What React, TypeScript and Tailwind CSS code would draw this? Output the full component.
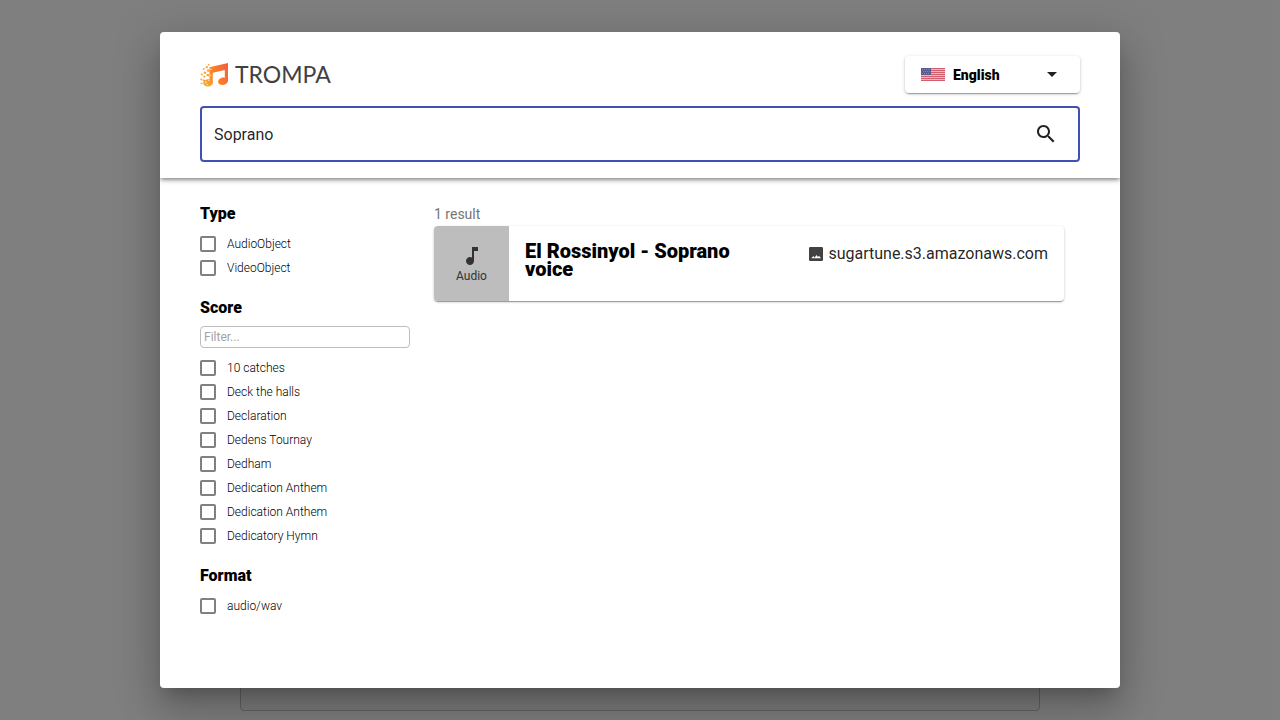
import { useState } from "react";

const scores = [
  "10 catches",
  "Deck the halls",
  "Declaration",
  "Dedens Tournay",
  "Dedham",
  "Dedication Anthem",
  "Dedication Anthem",
  "Dedicatory Hymn",
];

function Logo() {
  return (
    <a href="#" className="flex h-9 items-center gap-1.5 text-[#414042]">
      <svg width="29" height="25" viewBox="0 0 29 25" aria-hidden="true">
        <defs>
          <linearGradient id="note" gradientUnits="userSpaceOnUse" x1="2" x2="28" y1="20" y2="6">
            <stop offset="0" stopColor="#fbb03b" />
            <stop offset="0.45" stopColor="#fb8420" />
            <stop offset="1" stopColor="#f4603c" />
          </linearGradient>
        </defs>
        <g fill="url(#note)">
          <path d="M9.500 5.200 28 1v18h-3.200V8L12.800 10.800V21H9.500z" />
          <ellipse cx="23" cy="19.200" rx="5" ry="3.700" transform="rotate(-12 23 19.200)" />
          <ellipse cx="8" cy="20.800" rx="4.900" ry="3.700" transform="rotate(-12 8 20.800)" />
        </g>
        <path
          fill="#fba32f"
          d="m6 4 2.200.6-.8 2-1.900-.8zM3 6l1.800.4-.5 1.700L2.600 7.500zM7 7.500l3 .2-.6 2.200-2.400-.5zM4 9.500l2.400.6-.7 2-2.200-.8zM1 11.500l1.900.3-.5 1.700-1.700-.5zM6.500 12l3 .3-.5 2.200-2.500-.5zM3.500 13.500l2 .4-.5 1.900-1.800-.6zM.6 16.500l1.800.3-.4 1.600-1.700-.5zM3 17.500l2.200.3-.5 2-2-.7zM.8 20.500l1.700.2-.3 1.500-1.600-.5zM8 2l1.600.3-.4 1.400-1.400-.4z"
        />
        <path
          fill="#fff"
          d="m10.500 6.500 1.200.3-.4 1.200-1.100-.4zM8.500 17.500l1.200.3-.4 1.200-1.100-.4zM5.500 19.500l1.200.3-.4 1.200-1.100-.4zM10.300 12.500l1 .2-.3 1-1-.3zM7 22l1 .2-.3.900-1-.3z"
        />
      </svg>
      <span className="font-[Lato,sans-serif] text-[23px] leading-none">TROMPA</span>
    </a>
  );
}

function UsFlag() {
  return (
    <svg
      width="24"
      height="13"
      viewBox="0 0 24 13"
      className="pointer-events-none absolute left-4 top-3"
      aria-hidden="true"
    >
      <rect width="24" height="13" fill="#eab8bf" />
      <path
        stroke="#d0606f"
        d="M0 .5h24M0 2.500h24M0 4.500h24M0 6.500h24M0 8.500h24M0 10.500h24M0 12.500h24"
      />
      <rect width="10" height="7" fill="#595c8c" />
      <path
        stroke="#8386aa"
        strokeDasharray="1 1"
        d="M1 1.500h8M2 3.500h8M1 5.500h8"
      />
    </svg>
  );
}

function LanguageSelect() {
  return (
    <div className="relative w-[175px] rounded bg-white shadow-[0_3px_1px_-2px_rgba(0,0,0,0.2),0_1px_2px_0_rgba(0,0,0,0.2),0_1px_4px_0_rgba(0,0,0,0.12)]">
      <UsFlag />
      <select
        aria-label="Language"
        className="block h-[37px] w-full appearance-none rounded bg-transparent pl-12 pr-10 text-sm font-black text-black"
      >
        <option>English</option>
      </select>
      <svg
        width="24"
        height="24"
        viewBox="0 0 24 24"
        fill="#212121"
        className="pointer-events-none absolute right-4 top-1.5"
        aria-hidden="true"
      >
        <path d="m7 10 5 5 5-5z" />
      </svg>
    </div>
  );
}

function SearchField() {
  const [query, setQuery] = useState("Soprano");
  return (
    <form
      className="mt-3 flex h-14 items-center rounded border-2 border-[#3f51b5] pl-3 pr-5"
      onSubmit={(event) => event.preventDefault()}
    >
      <input
        type="text"
        aria-label="Search"
        value={query}
        onChange={(event) => setQuery(event.target.value)}
        className="min-w-0 flex-1 bg-transparent pt-0.5 text-base text-black/87 outline-none"
      />
      <button type="submit" aria-label="Search">
        <svg width="24" height="24" viewBox="0 0 24 24" fill="#212121">
          <path d="M15.500 14h-.79l-.28-.27C15.410 12.590 16 11.110 16 9.500 16 5.910 13.090 3 9.500 3S3 5.910 3 9.500 5.910 16 9.500 16c1.610 0 3.090-.59 4.230-1.570l.27.28v.79l5 4.990L20.490 19l-4.990-5zm-6 0C7.010 14 5 11.990 5 9.500S7.010 5 9.500 5 14 7.010 14 9.500 11.990 14 9.500 14z" />
        </svg>
      </button>
    </form>
  );
}

function Option({ label }: { label: string }) {
  return (
    <li>
      <label className="flex h-6 items-center gap-[11px] text-xs font-light text-black">
        <input
          type="checkbox"
          className="size-4 shrink-0 appearance-none rounded-xs border-2 border-[#808080] checked:bg-[#3f51b5]"
        />
        {label}
      </label>
    </li>
  );
}

function Facet({
  title,
  options,
  filterable = false,
}: {
  title: string;
  options: string[];
  filterable?: boolean;
}) {
  return (
    <section>
      <h2 className="text-base font-black text-black">{title}</h2>
      {filterable && (
        <input
          type="text"
          aria-label={`Filter ${title}`}
          placeholder="Filter..."
          className="mb-2 mt-1.5 block h-[22px] w-full rounded border border-[#bdbdbd] px-[3px] text-xs placeholder:text-[#a3a3a3]"
        />
      )}
      <ul className={filterable ? "" : "mt-1.5"}>
        {options.map((option, index) => (
          <Option key={index} label={option} />
        ))}
      </ul>
    </section>
  );
}

function ResultCard() {
  return (
    <article className="flex h-[75px] overflow-hidden rounded bg-white shadow-[0_2px_1px_-1px_rgba(0,0,0,0.2),0_1px_1px_0_rgba(0,0,0,0.14),0_1px_3px_0_rgba(0,0,0,0.2)]">
      <div className="flex w-[75px] shrink-0 flex-col items-center justify-center bg-[#bdbdbd] text-xs text-[#333]">
        <svg width="24" height="24" viewBox="0 0 24 24" fill="#333" aria-hidden="true">
          <path d="M12 3v10.550c-.59-.34-1.270-.55-2-.55-2.210 0-4 1.790-4 4s1.790 4 4 4 4-1.790 4-4V7h4V3h-6z" />
        </svg>
        <span>Audio</span>
      </div>
      <div className="flex min-w-0 flex-1 items-start justify-between px-4 pt-4">
        <h3 className="w-60 text-xl/[18px] font-black text-black">
          El Rossinyol - Soprano voice
        </h3>
        <a href="#" className="flex items-center gap-1 text-base text-black/87">
          <svg width="16" height="16" viewBox="0 0 24 24" fill="#424242" aria-hidden="true">
            <path d="M22.500 20.500v-17c0-1.100-.9-2-2-2h-17c-1.100 0-2 .9-2 2v17c0 1.100.9 2 2 2h17c1.100 0 2-.9 2-2zM5 18.500l3-3.500 2 2.500 2.500-4 2.500 3 1.500-2 3 4z" fillRule="evenodd" />
          </svg>
          sugartune.s3.amazonaws.com
        </a>
      </div>
    </article>
  );
}

export default function App() {
  return (
    <div className="relative flex min-h-screen flex-col overflow-hidden bg-white font-[Roboto,sans-serif]">
      <main className="mx-auto mb-[9px] mt-20 w-full max-w-[800px] flex-1 rounded border border-[#c4c4c4] bg-[#f8f8f8]" />
      <div className="absolute inset-0 bg-black/50 p-8">
        <div
          role="dialog"
          aria-label="Search"
          className="mx-auto flex h-full max-w-[960px] flex-col overflow-hidden rounded bg-white shadow-[0_11px_15px_-7px_rgba(0,0,0,0.2),0_24px_38px_3px_rgba(0,0,0,0.14),0_9px_46px_8px_rgba(0,0,0,0.12)]"
        >
          <header className="relative px-10 pb-4 pt-6 shadow-[0_2px_4px_-1px_rgba(0,0,0,0.3),0_1px_6px_0_rgba(0,0,0,0.4)]">
            <div className="flex h-[38px] items-start justify-between">
              <Logo />
              <LanguageSelect />
            </div>
            <SearchField />
          </header>
          <div className="flex flex-1 gap-6 px-10 pt-6">
            <aside className="flex w-[210px] shrink-0 flex-col gap-4">
              <Facet title="Type" options={["AudioObject", "VideoObject"]} />
              <Facet title="Score" options={scores} filterable />
              <Facet title="Format" options={["audio/wav"]} />
            </aside>
            <section className="min-w-0 flex-1 pr-4">
              <p className="text-sm/6 text-[#757575]">1 result</p>
              <ResultCard />
            </section>
          </div>
        </div>
      </div>
    </div>
  );
}
